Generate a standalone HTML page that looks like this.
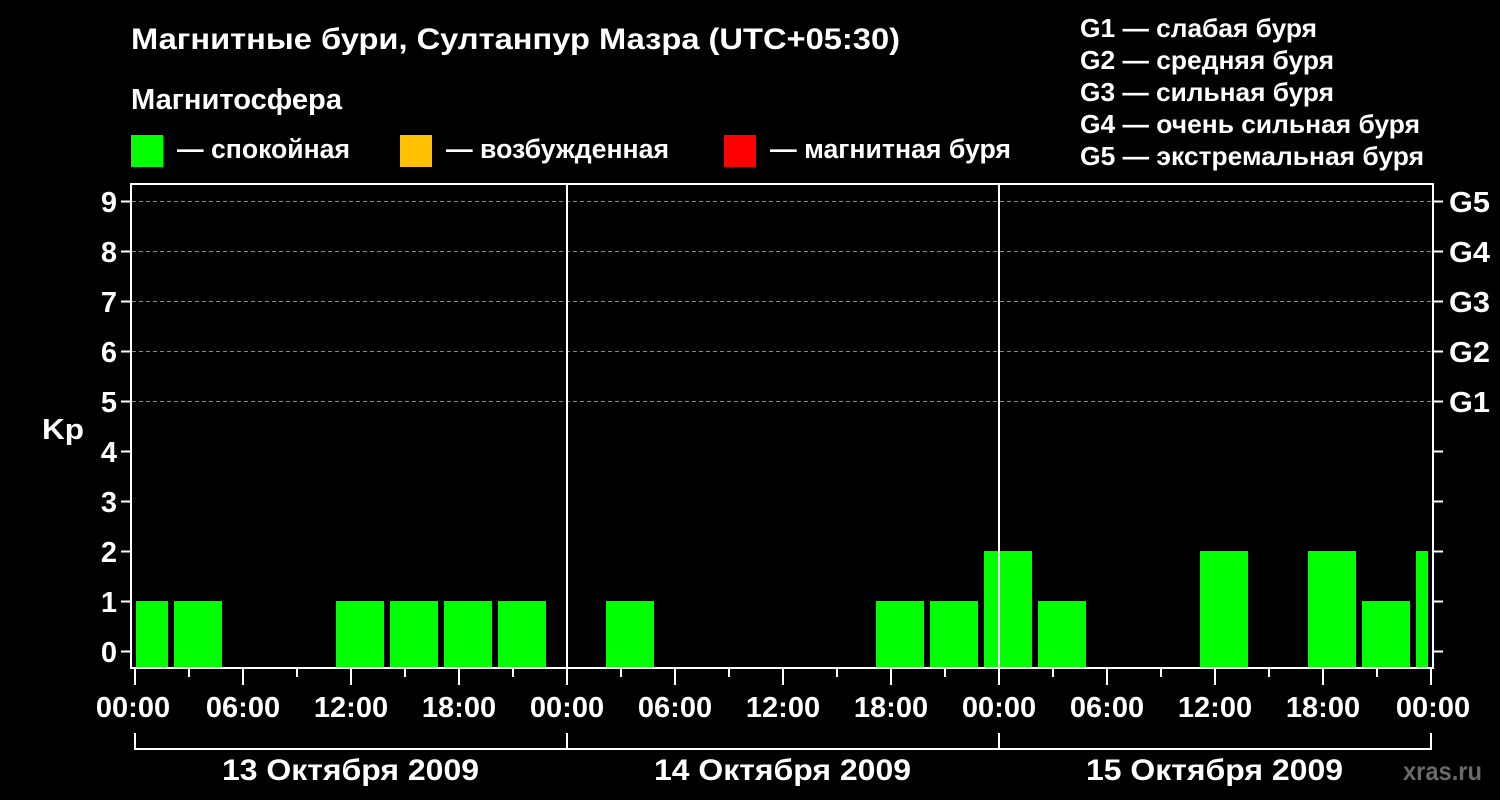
<!DOCTYPE html>
<html><head><meta charset="utf-8"><style>body{margin:0;background:#000}svg{display:block}text{font-family:"Liberation Sans",sans-serif;font-weight:bold;fill:#fff}</style></head><body>
<svg width="1500" height="800" viewBox="0 0 1500 800">
<rect width="1500" height="800" fill="#000"/>
<text x="131" y="49" font-size="30" textLength="769" lengthAdjust="spacingAndGlyphs">Магнитные бури, Султанпур Мазра (UTC+05:30)</text>
<text x="131" y="109" font-size="29" textLength="211" lengthAdjust="spacingAndGlyphs">Магнитосфера</text>
<rect x="131" y="135" width="32" height="32" fill="#0f0"/><text x="177" y="158" font-size="27" textLength="173" lengthAdjust="spacingAndGlyphs">— спокойная</text>
<rect x="400" y="135" width="32" height="32" fill="#ffc000"/><text x="446" y="158" font-size="27" textLength="223" lengthAdjust="spacingAndGlyphs">— возбужденная</text>
<rect x="724" y="135" width="32" height="32" fill="#f00"/><text x="770" y="158" font-size="27" textLength="241" lengthAdjust="spacingAndGlyphs">— магнитная буря</text>
<g font-size="26"><text x="1080" y="37" textLength="237" lengthAdjust="spacingAndGlyphs">G1 — слабая буря</text><text x="1080" y="69" textLength="254" lengthAdjust="spacingAndGlyphs">G2 — средняя буря</text><text x="1080" y="101" textLength="254" lengthAdjust="spacingAndGlyphs">G3 — сильная буря</text><text x="1080" y="133" textLength="340" lengthAdjust="spacingAndGlyphs">G4 — очень сильная буря</text><text x="1080" y="165" textLength="344" lengthAdjust="spacingAndGlyphs">G5 — экстремальная буря</text></g>
<g stroke="#888" stroke-dasharray="4,3" stroke-width="1">
<line x1="132" x2="1432" y1="201.5" y2="201.5"/><line x1="132" x2="1432" y1="251.5" y2="251.5"/><line x1="132" x2="1432" y1="301.5" y2="301.5"/><line x1="132" x2="1432" y1="351.5" y2="351.5"/><line x1="132" x2="1432" y1="401.5" y2="401.5"/></g>
<g fill="#0f0">
<rect x="136" y="601" width="32" height="67"/><rect x="174" y="601" width="48" height="67"/>
<rect x="336" y="601" width="48" height="67"/><rect x="390" y="601" width="48" height="67"/><rect x="444" y="601" width="48" height="67"/><rect x="498" y="601" width="48" height="67"/>
<rect x="606" y="601" width="48" height="67"/>
<rect x="876" y="601" width="48" height="67"/><rect x="930" y="601" width="48" height="67"/><rect x="984" y="551" width="48" height="117"/><rect x="1038" y="601" width="48" height="67"/>
<rect x="1200" y="551" width="48" height="117"/><rect x="1308" y="551" width="48" height="117"/><rect x="1362" y="601" width="48" height="67"/><rect x="1416" y="551" width="12" height="117"/>
</g>
<g stroke="#fff" stroke-width="2" fill="none">
<rect x="131" y="184" width="1302" height="484"/>
<line x1="567" y1="184" x2="567" y2="668"/><line x1="999" y1="184" x2="999" y2="668"/>
<path d="M121 201.5H131M121 251.5H131M121 301.5H131M121 351.5H131M121 401.5H131M121 451.5H131M121 501.5H131M121 551.5H131M121 601.5H131M121 651.5H131"/>
<path d="M1433 201.5H1443M1433 251.5H1443M1433 301.5H1443M1433 351.5H1443M1433 401.5H1443M1433 451.5H1443M1433 501.5H1443M1433 551.5H1443M1433 601.5H1443M1433 651.5H1443"/>
<path d="M135 668V685M189 668V677M243 668V685M297 668V677M351 668V685M405 668V677M459 668V685M513 668V677M567 668V685M621 668V677M675 668V685M729 668V677M783 668V685M837 668V677M891 668V685M945 668V677M999 668V685M1053 668V677M1107 668V685M1161 668V677M1215 668V685M1269 668V677M1323 668V685M1377 668V677M1431 668V685"/>
<path d="M135 733V749H1431V733M567 733V749M999 733V749"/>
</g>
<g font-size="29" text-anchor="end"><text x="117" y="212">9</text><text x="117" y="262">8</text><text x="117" y="312">7</text><text x="117" y="362">6</text><text x="117" y="412">5</text><text x="117" y="462">4</text><text x="117" y="512">3</text><text x="117" y="562">2</text><text x="117" y="612">1</text><text x="117" y="662">0</text></g>
<text x="42" y="439" font-size="29" textLength="42" lengthAdjust="spacingAndGlyphs">Kp</text>
<g font-size="29"><text x="1449" y="212" textLength="41" lengthAdjust="spacingAndGlyphs">G5</text><text x="1449" y="262" textLength="41" lengthAdjust="spacingAndGlyphs">G4</text><text x="1449" y="312" textLength="41" lengthAdjust="spacingAndGlyphs">G3</text><text x="1449" y="362" textLength="41" lengthAdjust="spacingAndGlyphs">G2</text><text x="1449" y="412" textLength="41" lengthAdjust="spacingAndGlyphs">G1</text></g>
<g font-size="29" text-anchor="middle"><text x="133" y="717">00:00</text><text x="243" y="717">06:00</text><text x="351" y="717">12:00</text><text x="459" y="717">18:00</text><text x="567" y="717">00:00</text><text x="675" y="717">06:00</text><text x="783" y="717">12:00</text><text x="891" y="717">18:00</text><text x="999" y="717">00:00</text><text x="1107" y="717">06:00</text><text x="1215" y="717">12:00</text><text x="1323" y="717">18:00</text><text x="1433" y="717">00:00</text></g>
<g font-size="30"><text x="222" y="780" textLength="257" lengthAdjust="spacingAndGlyphs">13 Октября 2009</text><text x="654" y="780" textLength="257" lengthAdjust="spacingAndGlyphs">14 Октября 2009</text><text x="1086" y="780" textLength="257" lengthAdjust="spacingAndGlyphs">15 Октября 2009</text></g>
<text x="1403" y="780" font-size="26" style="fill:#6a6a6a" textLength="79" lengthAdjust="spacingAndGlyphs">xras.ru</text>
</svg>
</body></html>
